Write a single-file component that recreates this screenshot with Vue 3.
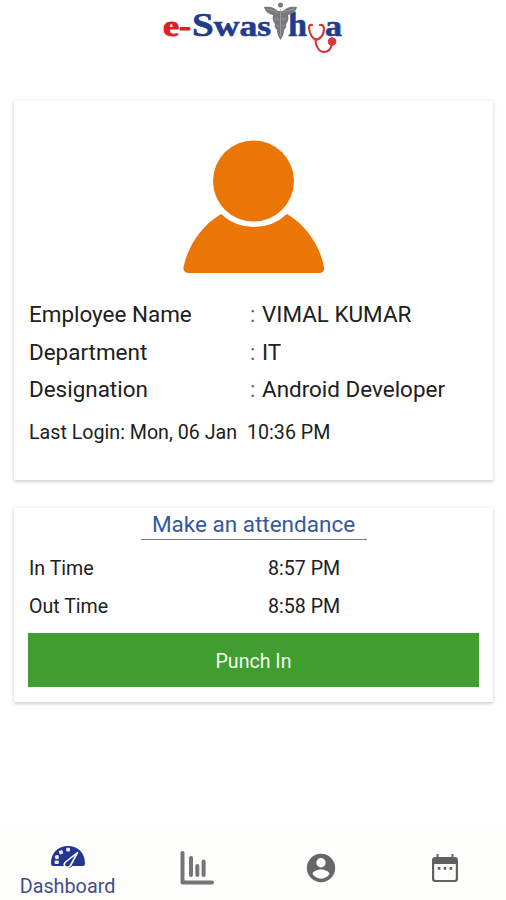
<script setup>
const details = [
  { label: 'Employee Name', value: 'VIMAL KUMAR' },
  { label: 'Department', value: 'IT' },
  { label: 'Designation', value: 'Android Developer' },
]
const times = [
  { label: 'In Time', value: '8:57 PM' },
  { label: 'Out Time', value: '8:58 PM' },
]
</script>

<template>
  <div class="screen">
    <header class="header">
      <svg class="logo" width="190" height="60" viewBox="0 0 190 60" role="img" aria-label="e-Swasthya">
        <g class="wordmark">
          <text class="red" x="3" y="36" textLength="28" lengthAdjust="spacingAndGlyphs">e-</text>
          <text x="32" y="36" textLength="79" lengthAdjust="spacingAndGlyphs"><tspan class="cap">S</tspan>was</text>
          <text class="tall" x="128" y="36" textLength="19" lengthAdjust="spacingAndGlyphs">h</text>
          <text x="165" y="36" textLength="17" lengthAdjust="spacingAndGlyphs">a</text>
        </g>
        <g fill="#77797b">
          <circle cx="120.500" cy="5" r="2.500" />
          <path d="M104 7c6-1 10 0 14 4h5c4-4 8-5 14-4c-1 4-4 7-9 8c1 4 0 7-2 9c1 3-1 5-2 6c0 4-1 6-3.500 10c-2.500-4-3.500-6-3.500-10c-2-2-3-4-2-6c-2-3-3-5-2-9c-5-1-8-4-9-8z" />
        </g>
        <g fill="none" stroke="#a4a6a8" stroke-width="0.800">
          <path d="M107 9q7 1 11 4m16-4q-7 1-11 4M115 18l4 2m7-2l-4 2M116 25l3 1m6-1l-3 1M120.500 9v27" />
        </g>
        <g fill="none" stroke="#d5383c" stroke-width="2.200" stroke-linecap="round">
          <path d="M152 25q-3-1-3 3q1 9 7 12q7-2 8-10q0-6-4-5" />
          <path d="M156 39q-1 2 0 5c2 6 4 8 8 8c5 0 7-3 8-8" />
          <circle cx="172" cy="41.500" r="3.800" fill="#d5383c" stroke-width="1" />
        </g>
      </svg>
    </header>

    <main class="content">
      <section class="card profile">
        <svg class="avatar" width="142" height="134" viewBox="0 0 142 134">
          <g fill="#eb7608">
            <circle cx="70.500" cy="41" r="40.500" />
            <path d="M38 74C18 86 5 106 .5 127Q0 133 6 133H136Q142 133 141 127C137 106 124 86 104 74Q90 87 71 87T38 74Z" />
          </g>
        </svg>
        <dl class="details">
          <div v-for="d in details" :key="d.label" class="row">
            <dt>{{ d.label }}</dt>
            <dd><span class="colon">:</span><span>{{ d.value }}</span></dd>
          </div>
        </dl>
        <p class="last-login"><span>Last Login: Mon, 06 Jan</span><span>10:36 PM</span></p>
      </section>

      <section class="card attendance">
        <h2 class="title">Make an attendance</h2>
        <div v-for="t in times" :key="t.label" class="time-row">
          <span>{{ t.label }}</span><span>{{ t.value }}</span>
        </div>
        <button class="punch" type="button">Punch In</button>
      </section>
    </main>

    <nav class="nav">
      <a class="tab active">
        <svg width="34" height="22" viewBox="0 0 34 22">
          <path d="M2 20Q0 20 0 17C0 7 7 0 17 0S34 7 34 17Q34 20 32 20H21.500Q20 22 17 22T12.500 20Z" fill="#24358f" />
          <g fill="#e9ecf7">
            <rect x="15.200" y="1.800" width="3.800" height="3.800" rx="1" />
            <rect x="8" y="4.300" width="3.800" height="3.800" rx="1" transform="rotate(-20 10 6)" />
            <rect x="4" y="9.200" width="3.800" height="3.800" rx="1" transform="rotate(-15 6 11)" />
            <rect x="3.600" y="14.500" width="4.200" height="3.400" rx="1" />
          </g>
          <path d="M26.500 6.500L14 16.500Q12.500 18.500 14 20.500Q17 22.500 19.500 19.500Z" fill="#24358f" stroke="#fff" stroke-width="1.600" stroke-linejoin="round" />
        </svg>
        <span>Dashboard</span>
      </a>
      <a class="tab">
        <svg width="34" height="34" viewBox="0 0 34 34" fill="none" stroke="#757575" stroke-width="4" stroke-linecap="round" stroke-linejoin="round">
          <path d="M2.500 2V31.500H32" />
          <path d="M11 7V24M17.300 15V24M23.600 10.500V24" />
        </svg>
      </a>
      <a class="tab">
        <svg width="34" height="34" viewBox="0 0 24 24">
          <path fill="#666" d="M12 2a10 10 0 1 0 0 20 10 10 0 0 0 0-20zm0 3a3.300 3.300 0 1 1 0 6.600A3.300 3.300 0 0 1 12 5zm0 14.500c-2.500 0-4.700-1.200-6-3.200 0-2 4-3.200 6-3.200s6 1.200 6 3.200c-1.300 2-3.500 3.200-6 3.200z" />
        </svg>
      </a>
      <a class="tab">
        <svg width="26" height="30" viewBox="0 0 26 30">
          <path fill="#606060" fill-rule="evenodd" d="M4.500 1h2v3h13V1h2v3H23q3 0 3 3v19q0 3-3 3H3q-3 0-3-3V7q0-3 3-3h1.500zM2.200 11v14.500q0 1.500 1.500 1.500h18.600q1.500 0 1.500-1.500V11z" />
          <path fill="#606060" d="M5.800 14h2.600v2.800H5.800zm5.900 0h2.600v2.800h-2.600zm5.900 0h2.600v2.800h-2.600z" />
        </svg>
      </a>
    </nav>
  </div>
</template>

<style>
body {
  margin: 0;
  background: #fefefe;
}
</style>

<style scoped>
.screen {
  box-sizing: border-box;
  display: flex;
  flex-direction: column;
  width: 506px;
  height: 900px;
  overflow: hidden;
  background: #fefefe;
  color: #202020;
  font-family: Roboto, "Liberation Sans", sans-serif;
}
.header {
  display: flex;
  height: 101px;
  padding-left: 160px;
}
.logo {
  display: block;
}
.wordmark {
  font: bold 30px "Liberation Serif", serif;
  fill: #213c8e;
  stroke: #213c8e;
  stroke-width: 0.6px;
}
.wordmark .cap,
.wordmark .tall {
  font-size: 33px;
}
.wordmark .red {
  fill: #e01d22;
  stroke: #e01d22;
  stroke-width: 1px;
}
.content {
  display: flex;
  flex: 1;
  flex-direction: column;
  gap: 28px;
  padding: 0 13px 0 14px;
}
.card {
  box-sizing: border-box;
  background: #fff;
  box-shadow: 0 2px 3px rgba(0, 0, 0, 0.14), 0 0 5px rgba(0, 0, 0, 0.08);
}
.profile {
  display: flex;
  flex-direction: column;
  height: 379px;
  padding: 39px 15px 0;
}
.avatar {
  display: block;
  align-self: center;
}
.details {
  margin: 21px 0 0;
}
.row {
  display: grid;
  grid-template-columns: 221px 1fr;
  height: 37.8px;
  align-items: center;
  font-size: 22.45px;
  white-space: pre;
}
dd {
  display: flex;
  margin: 0;
}
.colon {
  width: 12px;
  color: #666;
}
.last-login {
  display: flex;
  gap: 10px;
  margin: 13px 0 0;
  font-size: 19.65px;
  line-height: 24px;
}
.attendance {
  display: flex;
  flex-direction: column;
  height: 194px;
  padding: 0 14px;
}
.title {
  box-sizing: border-box;
  align-self: center;
  width: 226px;
  height: 32px;
  margin: 0 0 9px;
  border-bottom: 1px solid #7c7c80;
  color: #35589c;
  font-size: 22.5px;
  font-weight: 400;
  line-height: 32px;
  text-align: center;
}
.time-row {
  display: grid;
  grid-template-columns: 239px 1fr;
  height: 38px;
  padding-left: 1px;
  align-items: center;
  font-size: 19.6px;
}
.punch {
  height: 54px;
  margin-top: 8px;
  padding: 2px 0 0;
  border: 0;
  background: #409d30;
  color: #f2faf0;
  font: 19.6px Roboto, sans-serif;
}
.nav {
  display: grid;
  box-sizing: border-box;
  grid-template-columns: 135px 124px 123px 125px;
  height: 75px;
  background: #fdfefc;
}
.tab {
  display: flex;
  flex-direction: column;
  align-items: center;
  justify-content: center;
  padding-top: 11px;
}
.tab.active {
  justify-content: flex-start;
  padding-top: 21px;
  gap: 7px;
  color: #454c8c;
  font-size: 19.8px;
  line-height: 24px;
}
</style>
